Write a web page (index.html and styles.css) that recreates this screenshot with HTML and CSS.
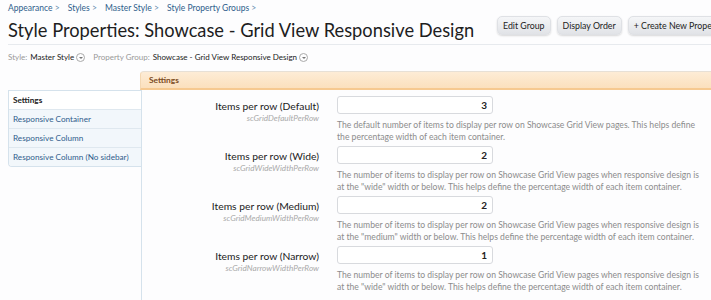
FILE: index.html
```html
<!DOCTYPE html>
<html lang="en">
<head>
  <meta charset="UTF-8">
  <title>Style Properties: Showcase - Grid View Responsive Design</title>
  <link rel="stylesheet" href="styles.css">
</head>
<body>
  <div class="page">
    <div class="breadcrumb">
      <a href="#">Appearance</a> &gt;
      <a href="#">Styles</a> &gt;
      <a href="#">Master Style</a> &gt;
      <a href="#">Style Property Groups</a> &gt;
    </div>

    <div class="title-bar">
      <h1>Style Properties: Showcase - Grid View Responsive Design</h1>
      <div class="top-ctrl">
        <a class="button" href="#">Edit Group</a>
        <a class="button" href="#">Display Order</a>
        <a class="button" href="#">+ Create New Property</a>
      </div>
    </div>

    <div class="chooser">
      <span class="label">Style:</span> Master Style <span class="arrow"></span>
      <span class="label group-label">Property Group:</span> Showcase - Grid View Responsive Design <span class="arrow"></span>
    </div>

    <div class="tab-header">Settings</div>

    <div class="panes">
      <ul class="side-nav">
        <li class="current">Settings</li>
        <li><a href="#">Responsive Container</a></li>
        <li><a href="#">Responsive Column</a></li>
        <li><a href="#">Responsive Column (No sidebar)</a></li>
      </ul>

      <form class="props">
        <div class="row">
          <div class="name">
            <label>Items per row (Default)</label>
            <span class="hint">scGridDefaultPerRow</span>
          </div>
          <div class="value">
            <input type="text" value="3">
            <p>The default number of items to display per row on Showcase Grid View pages. This helps define the percentage width of each item container.</p>
          </div>
        </div>
        <div class="row">
          <div class="name">
            <label>Items per row (Wide)</label>
            <span class="hint">scGridWideWidthPerRow</span>
          </div>
          <div class="value">
            <input type="text" value="2">
            <p>The number of items to display per row on Showcase Grid View pages when responsive design is at the "wide" width or below. This helps define the percentage width of each item container.</p>
          </div>
        </div>
        <div class="row">
          <div class="name">
            <label>Items per row (Medium)</label>
            <span class="hint">scGridMediumWidthPerRow</span>
          </div>
          <div class="value">
            <input type="text" value="2">
            <p>The number of items to display per row on Showcase Grid View pages when responsive design is at the "medium" width or below. This helps define the percentage width of each item container.</p>
          </div>
        </div>
        <div class="row">
          <div class="name">
            <label>Items per row (Narrow)</label>
            <span class="hint">scGridNarrowWidthPerRow</span>
          </div>
          <div class="value">
            <input type="text" value="1">
            <p>The number of items to display per row on Showcase Grid View pages when responsive design is at the "wide" width or below. This helps define the percentage width of each item container.</p>
          </div>
        </div>
      </form>
    </div>
  </div>
</body>
</html>
```

FILE: styles.css
```css
* {
  box-sizing: border-box;
}

html, body {
  overflow: hidden;
}

body {
  margin: 0;
  background: #fdfdfe;
  font-family: Lato, "Liberation Sans", sans-serif;
  color: #333;
}

a {
  text-decoration: none;
}

.page {
  padding: 3px 0 0 8px;
}

.breadcrumb {
  font-size: 8.5px;
  color: #6a8fb0;
  height: 12px;
}

.breadcrumb a {
  color: #2f5d8c;
}

.breadcrumb a:not(:first-child) {
  margin-left: 6px;
}

.title-bar {
  display: flex;
  align-items: center;
  justify-content: space-between;
  border-bottom: 1px solid #e7eaee;
  height: 30px;
  white-space: nowrap;
}

h1 {
  margin: 0;
  font-size: 18.3px;
  font-weight: normal;
  color: #1e1e1e;
}

.top-ctrl {
  display: flex;
  align-self: flex-start;
  gap: 6px;
  flex-shrink: 0;
  width: 216px;
  overflow: hidden;
  padding: 1px 0 4px 2px;
}

.button {
  flex-shrink: 0;
  font-size: 8.8px;
  color: #222;
  background: linear-gradient(#f5f6f8, #e1e3e7);
  border: 1px solid #dfe1e5;
  border-radius: 5px;
  box-shadow: 0 1px 2px rgba(0, 0, 0, 0.15);
  padding: 3px 5px;
  line-height: 11px;
}

.chooser {
  font-size: 8px;
  color: #222;
  margin-top: 6px;
  height: 12px;
  display: flex;
  align-items: center;
  white-space: nowrap;
}

.chooser .label {
  color: #999;
  margin-right: 3px;
}

.chooser .group-label {
  margin-left: 8px;
}

.arrow {
  display: inline-block;
  width: 9px;
  height: 9px;
  margin-left: 2px;
  border: 1px solid #aaa;
  border-radius: 50%;
  position: relative;
}

.arrow::after {
  content: "";
  position: absolute;
  left: 2px;
  top: 3px;
  border-left: 2px solid transparent;
  border-right: 2px solid transparent;
  border-top: 2px solid #777;
}

.tab-header {
  margin: 8px 0 0 132px;
  height: 19px;
  background: linear-gradient(#fdecd6, #fbe0bd);
  border-top: 1px solid #e7e0d6;
  border-bottom: 2px solid #f6c990;
  border-left: 1px solid #f3d7b2;
  border-top-left-radius: 4px;
  font-size: 8.4px;
  font-weight: bold;
  color: #7b4c1e;
  padding: 3px 0 0 8px;
}

.panes {
  display: grid;
  grid-template-columns: 133px 1fr;
  height: 220px;
}

.side-nav {
  list-style: none;
  margin: 0;
  padding: 0;
  align-self: start;
  border: 1px solid #d5e2ec;
  border-top: none;
  border-right: none;
  border-radius: 0 0 0 4px;
  font-size: 8.2px;
  overflow: hidden;
  white-space: nowrap;
}

.side-nav li {
  height: 19px;
  line-height: 18px;
  padding-left: 4px;
  border-top: 1px solid #dfe8ef;
  background: #f2f7fb;
}

.side-nav li.current {
  border-top-color: #d5e2ec;
  background: #fff;
  font-weight: bold;
  color: #222;
}

.side-nav a {
  color: #2f5d8c;
}

.props {
  border-left: 1px solid #d5e2ec;
  padding-top: 6px;
}

.row {
  display: flex;
  height: 50px;
}

.name {
  width: 177px;
  text-align: right;
  display: flex;
  flex-direction: column;
  padding-top: 4px;
}

.name label {
  font-size: 10.3px;
  color: #222;
  line-height: 13px;
}

.hint {
  font-size: 8.2px;
  font-style: italic;
  color: #aaa;
  line-height: 10px;
}

.value {
  margin-left: 18px;
}

.value input {
  display: block;
  width: 156px;
  height: 18px;
  border: 1px solid #d8dade;
  border-radius: 3px;
  background: #fff;
  text-align: right;
  font-family: inherit;
  font-size: 10px;
  font-weight: bold;
  color: #222;
  padding: 0 5px;
}

.value p {
  margin: 5px 0 0;
  font-size: 8.6px;
  line-height: 12px;
  color: #8c8c8c;
  width: 370px;
}
```
